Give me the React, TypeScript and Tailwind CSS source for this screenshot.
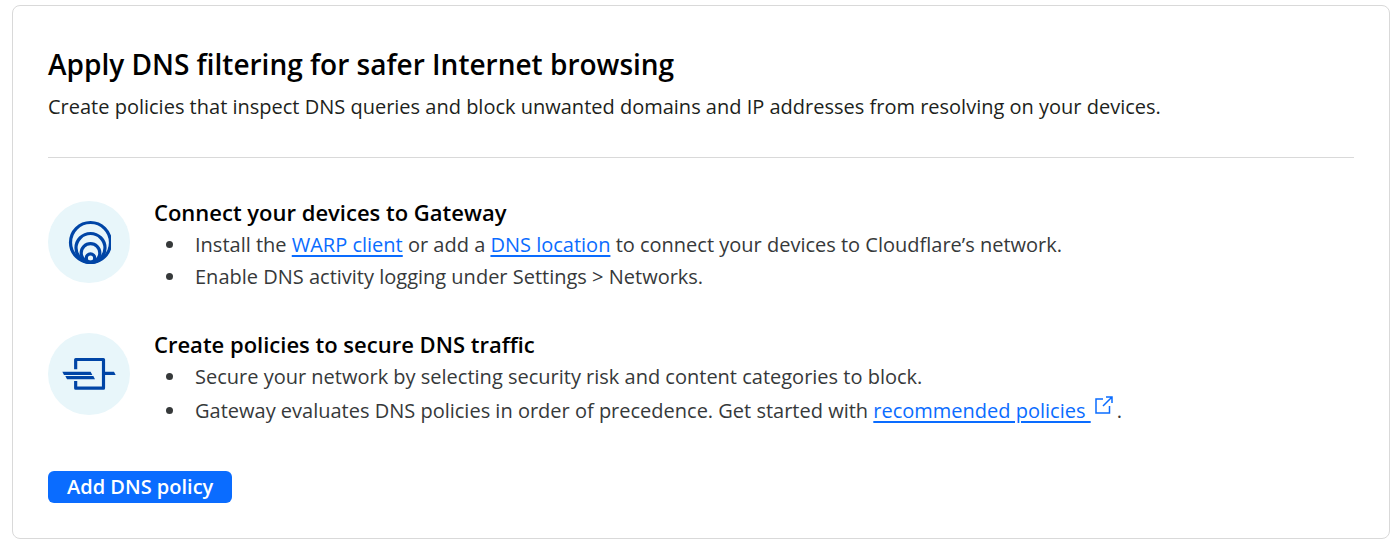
import React from "react";

const linkStyles = "text-[#0a6cff] underline decoration-2 underline-offset-3";

function TextLink({ children }: { children: React.ReactNode }) {
  return (
    <a href="#" className={linkStyles}>
      {children}
    </a>
  );
}

function RingsIcon() {
  return (
    <svg viewBox="0 0 44 44" className="h-11 w-11" fill="none" stroke="#0045a6" strokeWidth="3.2">
      <circle cx="23.500" cy="22.500" r="20" />
      <circle cx="23.500" cy="28" r="14.5" />
      <circle cx="23.500" cy="33" r="9.3" />
      <circle cx="23.500" cy="38" r="4.2" />
    </svg>
  );
}

function PolicyIcon() {
  return (
    <svg viewBox="66 102 162 102" className="h-[34px] w-[54px]" fill="#0045a6">
      <path
        d="M107 139V109.500H190.500V195.500H107V174"
        fill="none"
        stroke="#0045a6"
        strokeWidth="9.500"
        strokeLinejoin="round"
      />
      <path d="M67 146.500H152L157 156H72ZM76 159H160L165 168.500H81ZM193 146.500H222L227 156H193Z" />
    </svg>
  );
}

function ExternalIcon() {
  return (
    <svg
      viewBox="0 0 18 18"
      className="mr-1 mb-1 ml-1 inline h-[18px] w-[18px] align-baseline"
      fill="none"
      stroke="#0a6cff"
      strokeWidth="1.5"
    >
      <path d="M8 3H1v14h13.500v-7M11 1h6v6M17 1L8 10" />
    </svg>
  );
}

interface StepProps {
  icon: React.ReactNode;
  title: string;
  children: React.ReactNode;
}

function Step({ icon, title, children }: StepProps) {
  return (
    <section className="flex items-start gap-6">
      <div className="flex h-[82px] w-[82px] shrink-0 items-center justify-center rounded-full bg-[#e8f6fa]">
        {icon}
      </div>
      <div className="min-w-0 flex-1">
        <h2 className="text-[22px] leading-[22px] font-semibold text-black">{title}</h2>
        <ul className="mt-1.5 list-disc pl-[33px] text-[20px] leading-8 text-[#36393a] [&>li]:pl-2">
          {children}
        </ul>
      </div>
    </section>
  );
}

export default function App() {
  return (
    <main className="pt-[5px] pr-[10px] pb-3 pl-3 font-['Open_Sans',sans-serif]">
      <div className="rounded-lg border border-[#d9d9d9] bg-white px-[35px] pt-10 pb-[35px]">
        <h1 className="text-[28px] leading-9 font-semibold text-black">
          Apply DNS filtering for safer Internet browsing
        </h1>
        <p className="mt-[9px] text-[20px] leading-8 text-[#1d1f20]">
          Create policies that inspect DNS queries and block unwanted domains and IP addresses from
          resolving on your devices.
        </p>
        <hr className="mt-[34px] border-[#d9d9d9]" />
        <div className="mt-[43px] flex flex-col gap-10">
          <Step icon={<RingsIcon />} title="Connect your devices to Gateway">
            <li>
              Install the <TextLink>WARP client</TextLink> or add a <TextLink>DNS location</TextLink>{" "}
              to connect your devices to Cloudflare’s network.
            </li>
            <li>Enable DNS activity logging under Settings &gt; Networks.</li>
          </Step>
          <Step icon={<PolicyIcon />} title="Create policies to secure DNS traffic">
            <li>Secure your network by selecting security risk and content categories to block.</li>
            <li className="mt-0.5">
              Gateway evaluates DNS policies in order of precedence. Get started with{" "}
              <TextLink>recommended policies </TextLink> <ExternalIcon />.
            </li>
          </Step>
        </div>
        <button
          type="button"
          className="mt-11 h-8 rounded-md bg-[#0a6cff] px-[19px] text-[20px] leading-8 font-semibold text-white"
        >
          Add DNS policy
        </button>
      </div>
    </main>
  );
}
